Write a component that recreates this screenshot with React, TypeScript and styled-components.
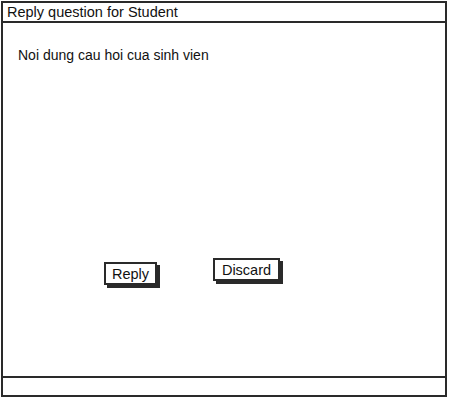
import React from "react";
import styled, { createGlobalStyle } from "styled-components";

const Global = createGlobalStyle`
  html, body { margin: 0; padding: 0; background: #ffffff; }
  body { font-family: "Liberation Sans", Arial, sans-serif; color: #111; }
`;

const Frame = styled.div`
  margin: 1px 0 0 1px;
  width: 446px;
  height: 396px;
  display: flex;
  flex-direction: column;
  box-sizing: border-box;
`;

const TitleBar = styled.div`
  height: 22px;
  box-sizing: border-box;
  border: 2px solid #2a2a2a;
  display: flex;
  align-items: center;
  padding-left: 4px;
  font-size: 14.5px;
  line-height: 1;
`;

const Body = styled.div`
  flex: 1;
  box-sizing: border-box;
  border-left: 2px solid #2a2a2a;
  border-right: 2px solid #2a2a2a;
  padding: 23px 0 0 15px;
  display: flex;
  flex-direction: column;
`;

const Question = styled.div`
  font-size: 14px;
  line-height: 18px;
`;

const ButtonRow = styled.div`
  margin-top: 194px;
  padding-left: 86px;
  display: flex;
  align-items: flex-start;
  gap: 56px;
`;

const Button = styled.div<{ $offset: number; $width: number }>`
  margin-top: ${(p) => p.$offset}px;
  width: ${(p) => p.$width}px;
  height: 23px;
  box-sizing: border-box;
  border: 2px solid #2a2a2a;
  box-shadow: 3px 3px 0 #2a2a2a;
  display: flex;
  align-items: center;
  justify-content: center;
  font-size: 14.5px;
  background: #fff;
`;

const Footer = styled.div`
  height: 21px;
  box-sizing: border-box;
  border: 2px solid #2a2a2a;
`;

export default function App() {
  return (
    <>
      <Global />
      <Frame>
        <TitleBar>Reply question for Student</TitleBar>
        <Body>
          <Question>Noi dung cau hoi cua sinh vien</Question>
          <ButtonRow>
            <Button $offset={4} $width={53}>Reply</Button>
            <Button $offset={0} $width={67}>Discard</Button>
          </ButtonRow>
        </Body>
        <Footer />
      </Frame>
    </>
  );
}
